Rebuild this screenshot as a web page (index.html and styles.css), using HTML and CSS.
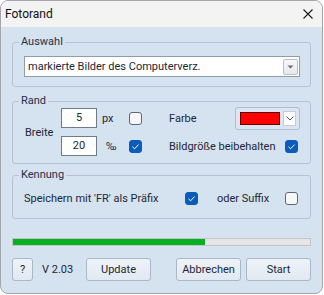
FILE: index.html
```html
<!DOCTYPE html>
<html lang="de">
<head>
  <meta charset="UTF-8">
  <meta name="viewport" content="width=device-width, initial-scale=1.0">
  <title>Fotorand</title>
  <link rel="stylesheet" href="styles.css">
</head>
<body>

  <div class="window">
    <div class="titlebar">
      <span class="title">Fotorand</span>
      <svg class="close" width="10" height="10" viewBox="0 0 10 10">
        <path d="M0.5 0.5 L9.5 9.5 M9.5 0.5 L0.5 9.5" stroke="#1a1a1a" stroke-width="1.1" fill="none"/>
      </svg>
    </div>

    <div class="content">
      <!-- Auswahl -->
      <fieldset class="group group-auswahl">
        <legend>Auswahl</legend>
        <div class="combo">
          <span class="combo-text">markierte Bilder des Computerverz.</span>
          <span class="combo-btn">
            <svg width="7" height="4" viewBox="0 0 7 4"><path d="M0.5 0.5 H6.5 L3.5 3.5 Z" fill="#6a6a6a"/></svg>
          </span>
        </div>
      </fieldset>

      <!-- Rand -->
      <fieldset class="group group-rand">
        <legend>Rand</legend>
        <div class="rand-grid">
          <span class="breite">Breite</span>
          <span class="field field-1">5</span>
          <span class="unit unit-1">px</span>
          <span class="check check-1"></span>
          <span class="label farbe">Farbe</span>
          <div class="color-pick">
            <span class="swatch"></span>
            <span class="color-btn">
              <svg width="8" height="5" viewBox="0 0 8 5"><path d="M0.5 0.5 L4 4 L7.5 0.5" stroke="#555" stroke-width="1" fill="none"/></svg>
            </span>
          </div>

          <span class="field field-2">20</span>
          <span class="unit unit-2">‰</span>
          <span class="check checked check-2"></span>
          <span class="label keep">Bildgröße beibehalten</span>
          <span class="check checked check-keep"></span>
        </div>
      </fieldset>

      <!-- Kennung -->
      <fieldset class="group group-kennung">
        <legend>Kennung</legend>
        <div class="kennung-row">
          <span>Speichern mit 'FR' als Präfix</span>
          <span class="check checked"></span>
          <span class="suffix">oder Suffix</span>
          <span class="check"></span>
        </div>
      </fieldset>

      <div class="progress">
        <div class="progress-fill" style="width: 64.7%"></div>
      </div>

      <div class="buttons">
        <button class="btn btn-help">?</button>
        <span class="version">V 2.03</span>
        <button class="btn">Update</button>
        <span class="spacer"></span>
        <button class="btn">Abbrechen</button>
        <button class="btn">Start</button>
      </div>
    </div>
  </div>

</body>
</html>
```

FILE: styles.css
```css
* {
  box-sizing: border-box;
  margin: 0;
  padding: 0;
}
body {
  font-family: 'Segoe UI', Roboto, sans-serif;
  font-size: 11px;
  color: #1c2733;
  background-color: #fff;
}
.window {
  width: 323px;
  height: 294px;
  border: 1px solid #a3a7ab;
  border-radius: 8px;
  overflow: hidden;
  background-color: #d5e2f0;
  display: flex;
  flex-direction: column;
}
.titlebar {
  height: 26px;
  flex: none;
  background-color: #f3f3f3;
  display: flex;
  align-items: center;
  justify-content: space-between;
  padding: 0 9px 0 4px;
}
.title {
  font-size: 12px;
  color: #111;
}
.content {
  flex: 1;
  padding: 8px 11px 0 11px;
}

/* Group boxes */
.group {
  border: 1px solid #b3c3d4;
  border-radius: 3px;
  min-width: 0;
}
.group legend {
  margin-left: 6px;
  padding: 0 2px;
  line-height: 14px;
  color: #1e3048;
}
.group-rand {
  margin-top: 7px;
  padding-bottom: 7px;
}
.group-kennung {
  margin-top: 4px;
  padding-bottom: 10px;
}

/* Combo box */
.combo {
  margin: 7px 10px 9px 11px;
  height: 21px;
  background-color: #fff;
  border: 1px solid #8f9dab;
  display: flex;
  align-items: center;
  justify-content: space-between;
  padding: 0 1px 0 3px;
}
.combo-btn {
  width: 15px;
  height: 16px;
  border: 1px solid #b7c1cc;
  border-radius: 2px;
  background: linear-gradient(#f6f8fa, #e4e9ef);
  display: flex;
  align-items: center;
  justify-content: center;
}

/* Rand */
.rand-grid {
  display: grid;
  grid-template-columns: 48px 41px 27px 40px minmax(0, 1fr) 65px;
  grid-template-rows: 20px 20px;
  row-gap: 8px;
  padding-right: 10px;
  align-items: center;
}
.breite {
  grid-row: 1 / 3;
  padding-left: 12px;
}
.field {
  width: 36px;
  height: 20px;
  background-color: #fff;
  border: 1px solid #6f7b88;
  text-align: center;
  line-height: 18px;
}
.unit-2 {
  padding-left: 4px;
}
.farbe {
  grid-column: 5;
}
.keep {
  grid-column: 5;
  white-space: nowrap;
}
.check-keep {
  grid-column: 6;
  justify-self: end;
  margin-right: 2px;
}
.color-pick {
  grid-column: 6;
  height: 23px;
  border: 1px solid #aebfd1;
  border-radius: 3px;
  background-color: #dbe6f2;
  display: flex;
  align-items: center;
  padding: 0 3px 0 4px;
  justify-content: space-between;
}
.swatch {
  width: 40px;
  height: 13px;
  background-color: #ff0000;
  border: 1px solid #6b0000;
}
.color-btn {
  width: 13px;
  height: 15px;
  background-color: #fff;
  border: 1px solid #c4ccd5;
  display: flex;
  align-items: center;
  justify-content: center;
}

/* Checkboxes */
.check {
  width: 13px;
  height: 13px;
  border: 1px solid #5d6874;
  border-radius: 3px;
  background-color: #f7f7f7;
  display: inline-block;
}
.check.checked {
  border-color: #0b5cba;
  background-color: #0b5cba;
  background-image: url("data:image/svg+xml,%3Csvg xmlns='http://www.w3.org/2000/svg' width='11' height='11' viewBox='0 0 11 11'%3E%3Cpath d='M2.5 5.8 L4.6 7.8 L8.5 3.6' stroke='white' stroke-width='1' fill='none'/%3E%3C/svg%3E");
  background-repeat: no-repeat;
  background-position: center;
}

/* Kennung */
.kennung-row {
  display: grid;
  grid-template-columns: 161px 13px 1fr 13px;
  align-items: center;
  height: 20px;
  margin-top: 6px;
  padding: 0 12px 0 11px;
}
.suffix {
  padding-left: 19px;
}

/* Progress */
.progress {
  margin-top: 19px;
  height: 8px;
  background-color: #e6e6e6;
  border: 1px solid #c4c4c4;
}
.progress-fill {
  height: 100%;
  background-color: #06b025;
}

/* Bottom buttons */
.buttons {
  margin-top: 12px;
  display: flex;
  align-items: center;
}
.btn {
  width: 65px;
  height: 23px;
  font-family: inherit;
  font-size: 11px;
  color: #1c2733;
  background: linear-gradient(#eef3f8, #e1e9f2);
  border: 1px solid #a9b7c7;
  border-radius: 3px;
}
.btn-help {
  width: 21px;
}
.version {
  margin-left: 9px;
  width: 44px;
}
.spacer {
  flex: 1;
}
.btn + .btn {
  margin-left: 5px;
}
```
